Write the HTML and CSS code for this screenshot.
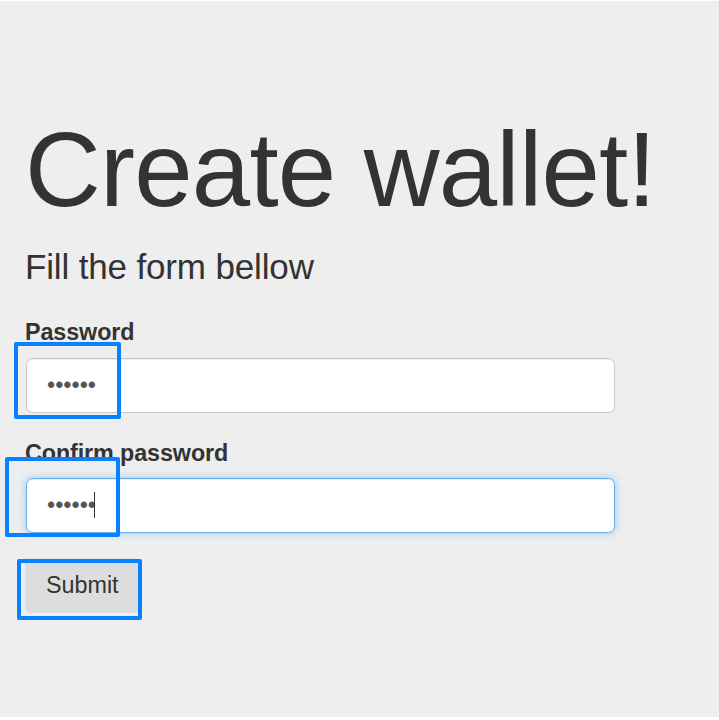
FILE: index.html
```html
<!DOCTYPE html>
<html lang="en">
<head>
<meta charset="utf-8">
<title>Create wallet!</title>
<link rel="stylesheet" href="styles.css">
</head>
<body>
<div class="jumbotron">
  <h1 class="title">Create wallet!</h1>
  <p class="lead">Fill the form bellow</p>
  <form class="wallet-form">
    <div class="form-group">
      <label class="field-label" for="pw">Password</label>
      <input class="form-control" id="pw" type="password" value="123456">
    </div>
    <div class="form-group">
      <label class="field-label" for="pw2">Confirm password</label>
      <div class="field-wrap">
        <input class="form-control is-focus" id="pw2" type="password" value="123456">
        <span class="caret"></span>
      </div>
    </div>
    <button class="btn" type="button">Submit</button>
  </form>
</div>
<div class="mark mark-1"></div>
<div class="mark mark-2"></div>
<div class="mark mark-3"></div>
</body>
</html>
```
FILE: styles.css
```css
html, body {
  margin: 0;
  padding: 0;
  background: #ffffff;
}
body {
  font-family: "Liberation Sans", Arial, sans-serif;
  color: #333333;
  font-size: 23.33px;
  line-height: 1.42857;
  position: relative;
  width: 719px;
  height: 720px;
  overflow: hidden;
}
.jumbotron {
  margin-top: 1px;
  height: 716px;
  box-sizing: border-box;
  background: #eeeeee;
  padding: 111px 25px 0 25px;
}
.title {
  margin: 0 0 14.5px 0;
  font-size: 105px;
  line-height: 115.5px;
  font-weight: 400;
  letter-spacing: -0.8px;
}
.lead {
  margin: 0 0 24px 0;
  font-size: 35px;
  line-height: 50px;
  font-weight: 400;
  letter-spacing: -0.15px;
}
.wallet-form {
  display: flex;
  flex-direction: column;
  align-items: flex-start;
}
.form-group {
  margin-bottom: 24px;
  width: 589px;
}
.field-label {
  display: block;
  font-weight: 700;
  margin-bottom: 8.3px;
  line-height: 33.33px;
  letter-spacing: -0.1px;
}
.field-wrap {
  position: relative;
}
.form-control {
  display: block;
  box-sizing: border-box;
  width: 589px;
  height: 55px;
  margin: 0 0 0 1px;
  padding: 10px 20px;
  font-family: "Liberation Sans", Arial, sans-serif;
  font-size: 23.33px;
  line-height: 33.33px;
  color: #555555;
  background: #ffffff;
  border: 1.7px solid #c8c8c8;
  border-radius: 6.5px;
  box-shadow: inset 0 1px 1px rgba(0,0,0,0.075);
  outline: none;
}
.form-control.is-focus {
  border-color: #66afe9;
  box-shadow: inset 0 1px 1px rgba(0,0,0,0.075), 0 0 9px rgba(102,175,233,0.6);
}
.caret {
  position: absolute;
  left: 69px;
  top: 14px;
  width: 1px;
  height: 26px;
  background: #333333;
}
.btn {
  margin-top: 1px;
  box-sizing: border-box;
  height: 55px;
  padding: 10px 20px;
  font-family: "Liberation Sans", Arial, sans-serif;
  font-size: 23.33px;
  line-height: 33.33px;
  color: #333333;
  background: #dddddd;
  border: 1px solid #e2e2e2;
  border-radius: 5px;
  cursor: pointer;
}
.mark {
  position: absolute;
  box-sizing: border-box;
  border: 4.5px solid #0a80ff;
  border-radius: 2px;
}
.mark-1 { left: 14px; top: 342px; width: 107px; height: 77px; }
.mark-2 { left: 5px; top: 457px; width: 115px; height: 80px; }
.mark-3 { left: 17px; top: 559px; width: 125px; height: 61px; }
```
